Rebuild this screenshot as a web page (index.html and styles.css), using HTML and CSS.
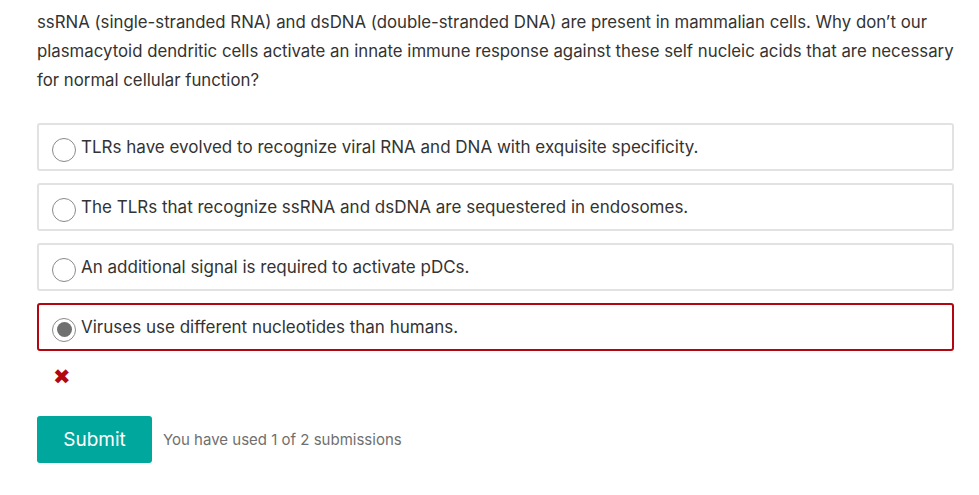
FILE: index.html
```html
<!DOCTYPE html>
<html>
<head>
<meta charset="utf-8">
<link rel="stylesheet" href="styles.css">
</head>
<body>
<div class="problem">
  <p class="question">ssRNA (single-stranded RNA) and dsDNA (double-stranded DNA) are present in mammalian cells. Why don’t our plasmacytoid dendritic cells activate an innate immune response against these self nucleic acids that are necessary for normal cellular function?</p>
  <div class="choices">
    <label class="choice"><span class="radio"></span><span class="label">TLRs have evolved to recognize viral RNA and DNA with exquisite specificity.</span></label>
    <label class="choice"><span class="radio"></span><span class="label">The TLRs that recognize ssRNA and dsDNA are sequestered in endosomes.</span></label>
    <label class="choice"><span class="radio"></span><span class="label">An additional signal is required to activate pDCs.</span></label>
    <label class="choice incorrect"><span class="radio checked"></span><span class="label">Viruses use different nucleotides than humans.</span></label>
  </div>
  <div class="status"><span class="xmark">✖</span></div>
  <div class="actions">
    <button class="submit">Submit</button>
    <span class="attempts">You have used 1 of 2 submissions</span>
  </div>
</div>
</body>
</html>
```

FILE: styles.css
```css
html, body {
  margin: 0;
  padding: 0;
  background: #fff;
}
body {
  font-family: "Inter", "Open Sans", sans-serif;
  color: #333;
}
.problem {
  padding: 8px 24px 0 37px;
}
.question {
  margin: 0;
  font-size: 16.8px;
  line-height: 29px;
  color: #333;
}
.choices {
  margin-top: 28px;
  margin-right: 1px;
  display: flex;
  flex-direction: column;
  gap: 12px;
}
.choice {
  display: flex;
  align-items: center;
  height: 48px;
  box-sizing: border-box;
  border: 2px solid #e2e2e2;
  border-radius: 3px;
  padding-left: 13px;
}
.choice.incorrect {
  border-color: #b20610;
}
.radio {
  width: 24px;
  height: 24px;
  border: 1.5px solid #8a8a8a;
  border-radius: 50%;
  box-sizing: border-box;
  flex: none;
  display: flex;
  align-items: center;
  justify-content: center;
  margin-right: 5px;
  margin-top: 5px;
}
.radio.checked::after {
  content: "";
  width: 15px;
  height: 15px;
  border-radius: 50%;
  background: #707070;
}
.label {
  font-size: 17px;
  color: #333;
}
.status {
  height: 52px;
  display: flex;
  align-items: center;
  padding-left: 16px;
}
.xmark {
  color: #b20610;
  font-family: "DejaVu Sans", sans-serif;
  font-size: 21px;
  font-weight: bold;
  line-height: 1;
}
.actions {
  display: flex;
  align-items: center;
  margin-top: 13px;
}
.submit {
  width: 115px;
  height: 47px;
  background: #00a79c;
  color: #fff;
  border: none;
  border-radius: 3px;
  font-family: "Inter", "Open Sans", sans-serif;
  font-size: 19px;
  padding: 0;
}
.attempts {
  margin-left: 11px;
  font-size: 15px;
  color: #6f6f6f;
}
```
